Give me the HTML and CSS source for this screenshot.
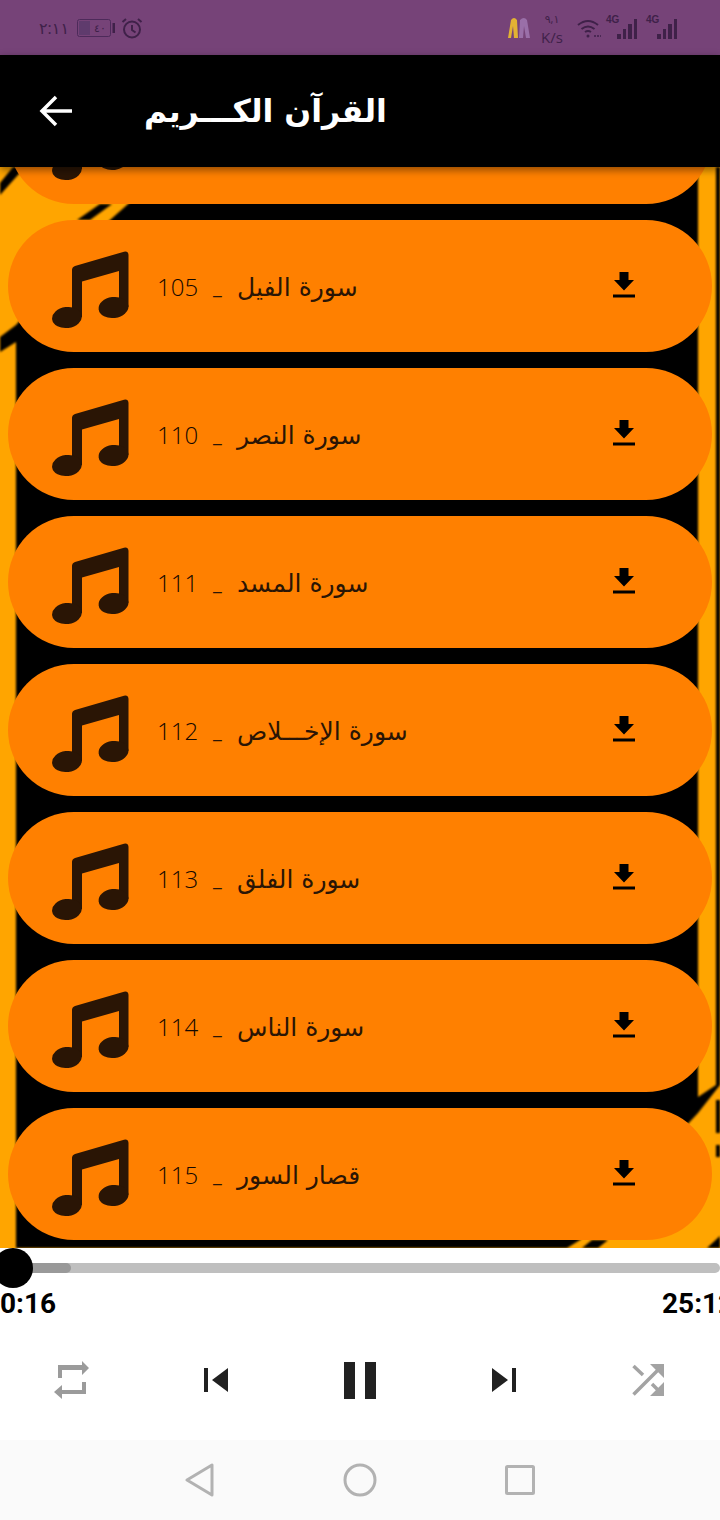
FILE: index.html
```html
<!DOCTYPE html>
<html lang="ar">
<head>
  <meta charset="UTF-8" />
  <title>القرآن الكريم</title>
  <link rel="stylesheet" href="styles.css">
</head>
<body>
  <svg width="0" height="0" class="icon-defs">
    <symbol id="note" viewBox="0 0 78 78">
      <path d="M20 19q0-3 3-4L72 .7q4-1 4.500 3V56H67V20L30 30.500V66H20z"/>
      <ellipse cx="15" cy="66.500" rx="15" ry="10.500" transform="rotate(-8 15 66.500)"/>
      <ellipse cx="61.500" cy="56.500" rx="15" ry="10.500" transform="rotate(-8 61.500 56.500)"/>
    </symbol>
    <symbol id="download" viewBox="0 0 22 26">
      <path d="M6.500 0h9v8H21L11 18.500 1 8h5.500zM0 22.500h22V25.500H0z"/>
    </symbol>
  </svg>

  <div class="status-bar">
    <div class="status-left">
      <span class="clock">٢:١١</span>
      <svg class="battery" width="38" height="20" viewBox="0 0 38 20">
        <rect x="0.500" y="1.500" width="33" height="17" rx="2" fill="none" stroke="#4d2a5a"/>
        <rect x="2" y="3" width="11" height="14" fill="#5f3b6d"/>
        <rect x="35.500" y="5" width="2.500" height="10" fill="#3f2149"/>
        <text x="17" y="14" class="battery-level">٤٠</text>
      </svg>
      <svg class="alarm" width="22" height="22" viewBox="0 0 22 22" fill="none" stroke="#3f2149" stroke-width="2">
        <circle cx="11" cy="12.500" r="8"/>
        <path d="M11 8v5l3.500 2.500M1.500 5 5 2M20.500 5 17 2"/>
      </svg>
    </div>
    <div class="status-right">
      <svg class="app-mark" width="24" height="22" viewBox="0 0 24 22">
        <path d="M1 21 4 3q3-4 6 0l1 18H7L6 9l-2 12z" fill="#e2b233"/>
        <path d="M12 21 13 3q4-4 7 0l3 18h-4l-2-12-1 12z" fill="#9a6fa8"/>
      </svg>
      <div class="speed"><span>٩,١</span><span>K/s</span></div>
      <svg class="wifi" width="24" height="24" viewBox="0 0 24 24" fill="none" stroke="#3f2149" stroke-width="2">
        <path d="M1 9q10-8 20 0M4.500 13q6.500-5 13 0"/>
        <path d="M8 16q3-2 6 0"/>
        <circle cx="11" cy="20" r="1.500" fill="#3f2149" stroke="none"/>
        <path d="M17 20h7" stroke-width="1.500" stroke-dasharray="2 1"/>
      </svg>
      <div class="signal"><b>4G</b><i></i><i></i><i></i><i></i></div>
      <div class="signal"><b>4G</b><i></i><i></i><i></i><i></i></div>
    </div>
  </div>

  <header class="app-bar">
    <svg class="back" width="36" height="32" viewBox="0 0 36 32" fill="none" stroke="#fff" stroke-width="3.500">
      <path d="M34 16H4M18 2 4 16l14 14"/>
    </svg>
    <h1>القرآن الكـــريم</h1>
  </header>

  <main class="list-area">
    <!-- striped wallpaper behind the list -->
    <svg class="stripes" width="720" height="1081" viewBox="0 0 720 1081" fill="#000">
      <path d="M170 0H698V946L580 1073 567 1081H16V175L0 185V170L16 158 110 53z"/>
      <path d="M0 16 13 0H25L0 28zM100 37H112L90 53H77z"/>
      <path d="M716 0H720V918L698 946V930L716 918z"/>
      <path d="M716 933H720V966H716zM716 978H720V990H716zM582 1081 592 1073H608L598 1081zM707 1081 720 1069V1081z"/>
    </svg>
    <ul class="track-list">
      <li class="track"><svg class="note"><use href="#note"/></svg></li>
      <li class="track">
        <svg class="note"><use href="#note"/></svg>
        <span class="num">105</span><span class="sep">_</span><span class="name">سورة الفيل</span>
        <svg class="dl"><use href="#download"/></svg>
      </li>
      <li class="track">
        <svg class="note"><use href="#note"/></svg>
        <span class="num">110</span><span class="sep">_</span><span class="name">سورة النصر</span>
        <svg class="dl"><use href="#download"/></svg>
      </li>
      <li class="track">
        <svg class="note"><use href="#note"/></svg>
        <span class="num">111</span><span class="sep">_</span><span class="name">سورة المسد</span>
        <svg class="dl"><use href="#download"/></svg>
      </li>
      <li class="track">
        <svg class="note"><use href="#note"/></svg>
        <span class="num">112</span><span class="sep">_</span><span class="name">سورة الإخـــلاص</span>
        <svg class="dl"><use href="#download"/></svg>
      </li>
      <li class="track">
        <svg class="note"><use href="#note"/></svg>
        <span class="num">113</span><span class="sep">_</span><span class="name">سورة الفلق</span>
        <svg class="dl"><use href="#download"/></svg>
      </li>
      <li class="track">
        <svg class="note"><use href="#note"/></svg>
        <span class="num">114</span><span class="sep">_</span><span class="name">سورة الناس</span>
        <svg class="dl"><use href="#download"/></svg>
      </li>
      <li class="track">
        <svg class="note"><use href="#note"/></svg>
        <span class="num">115</span><span class="sep">_</span><span class="name">قصار السور</span>
        <svg class="dl"><use href="#download"/></svg>
      </li>
    </ul>
  </main>

  <section class="player">
    <div class="seek">
      <div class="seek-done"></div>
      <div class="seek-thumb"></div>
    </div>
    <div class="times"><span>0:16</span><span class="total">25:12</span></div>
    <div class="controls">
      <svg width="36" height="40" viewBox="0 0 36 40" fill="#9b9b9b">
        <path d="M4 5h24V1l7 7-7 7v-5H8v8H4zM32 22v12H8v5l-8-7 8-7v5H28v-8z"/>
      </svg>
      <svg width="24" height="24" viewBox="0 0 24 24" fill="#212121">
        <path d="M0 0h4v24H0zM24 0v24L8 12z"/>
      </svg>
      <svg width="32" height="37" viewBox="0 0 32 37" fill="#212121">
        <path d="M0 0h11v37H0zM21 0h11v37H21z"/>
      </svg>
      <svg width="24" height="24" viewBox="0 0 24 24" fill="#212121">
        <path d="M0 0v24l16-12zM20 0h4v24h-4z"/>
      </svg>
      <svg width="32" height="32" viewBox="0 0 32 32" fill="#a3a3a3" stroke="#a3a3a3">
        <path d="M1.500 30.500 27 5M1.500 2 11 11M20 20l8 8" fill="none" stroke-width="3.500"/>
        <path d="M18 0H32V14zM32 18V32H18z" stroke="none"/>
      </svg>
    </div>
  </section>

  <nav class="nav-bar">
    <svg width="32" height="34" viewBox="0 0 32 34" fill="none" stroke="#b2b2b2" stroke-width="3" stroke-linejoin="round">
      <path d="M28 2v30L3 17z"/>
    </svg>
    <svg width="34" height="34" viewBox="0 0 34 34" fill="none" stroke="#b2b2b2" stroke-width="3">
      <circle cx="17" cy="17" r="15"/>
    </svg>
    <svg width="30" height="30" viewBox="0 0 30 30" fill="none" stroke="#b2b2b2" stroke-width="3" stroke-linejoin="round">
      <rect x="1.500" y="1.500" width="27" height="27" rx="1"/>
    </svg>
  </nav>
</body>
</html>
```
FILE: styles.css
```css
* {
  box-sizing: border-box;
  margin: 0;
  padding: 0;
}

body {
  width: 720px;
  height: 1520px;
  overflow: hidden;
  font-family: "Open Sans", "DejaVu Sans", sans-serif;
  background-color: #fff;
}

.icon-defs {
  display: none;
}

/* Status bar */
.status-bar {
  height: 55px;
  background-color: #764378;
  display: flex;
  justify-content: space-between;
  align-items: center;
  padding: 0 42px 0 39px;
  color: #3f2149;
}

.status-left,
.status-right {
  display: flex;
  align-items: center;
}

.status-left {
  gap: 6px;
}

.clock {
  font-size: 16px;
  margin-right: 2px;
}

.battery-level {
  font-size: 11px;
  fill: #3f2149;
}

.app-mark {
  margin-right: 4px;
}

.speed {
  display: flex;
  flex-direction: column;
  align-items: center;
  font-size: 15px;
  line-height: 18px;
  width: 34px;
  margin: 0 8px 0 0;
}

.speed span:first-child {
  font-size: 11px;
}

.wifi {
  margin-right: 5px;
}

.signal {
  position: relative;
  display: flex;
  align-items: flex-end;
  gap: 2px;
  width: 32px;
  height: 22px;
  padding-left: 11px;
}

.signal + .signal {
  margin-left: 8px;
}

.signal b {
  position: absolute;
  left: 0;
  top: -3px;
  font: 700 10px "Liberation Sans", sans-serif;
}

.signal i {
  width: 3.5px;
  background-color: #3f2149;
}

.signal i:nth-of-type(1) { height: 5px; }
.signal i:nth-of-type(2) { height: 10px; }
.signal i:nth-of-type(3) { height: 15px; }
.signal i:nth-of-type(4) { height: 20px; }

/* App bar */
.app-bar {
  position: relative;
  z-index: 2;
  height: 112px;
  background-color: #000;
  display: flex;
  align-items: center;
  padding-left: 38px;
  box-shadow: 0 3px 8px rgba(0, 0, 0, 0.45);
}

.app-bar h1 {
  margin-left: 70px;
  font-family: "DejaVu Sans", sans-serif;
  font-size: 31.5px;
  font-weight: 700;
  color: #fff;
}

/* Surah list */
.list-area {
  position: relative;
  height: 1081px;
  overflow: hidden;
  background-color: #ffa500;
}

.stripes {
  position: absolute;
  top: 0;
  left: 0;
  filter: blur(0.8px);
}

.track-list {
  position: relative;
  list-style: none;
  display: flex;
  flex-direction: column;
  gap: 16px;
  padding: 0 8px;
  margin-top: -95px;
}

.track {
  height: 132px;
  border-radius: 66px;
  background-color: #ff8000;
  display: flex;
  align-items: center;
  padding-left: 44px;
  color: #2a1505;
}

.note {
  width: 78px;
  height: 78px;
  fill: #2a1505;
  flex: none;
  margin-right: 27px;
  margin-top: 8px;
}

.num {
  font-size: 24px;
  font-weight: 300;
  color: #140800;
  width: 41px;
}

.sep {
  width: 39px;
  padding-left: 15px;
  font-size: 20px;
}

.name {
  font-family: "DejaVu Sans", sans-serif;
  font-size: 25px;
  font-weight: 400;
  margin-top: 2px;
}

.dl {
  width: 22px;
  height: 26px;
  fill: #000;
  margin-left: auto;
  margin-right: 77px;
  margin-top: -2px;
}

/* Player */
.player {
  height: 192px;
  padding-top: 15px;
  background-color: #fff;
}

.seek {
  position: relative;
  height: 10px;
  background-color: #bfbfbf;
  border-radius: 5px;
}

.seek-done {
  width: 71px;
  height: 10px;
  background-color: #999;
  border-radius: 5px;
}

.seek-thumb {
  position: absolute;
  left: -7px;
  top: -15px;
  width: 40px;
  height: 40px;
  border-radius: 50%;
  background-color: #000;
}

.times {
  display: flex;
  justify-content: space-between;
  overflow: hidden;
  margin-top: 14px;
  font-family: Roboto, sans-serif;
  font-size: 28px;
  font-weight: 700;
  line-height: 34px;
  color: #000;
}

.total {
  flex: none;
  width: 58px;
  white-space: nowrap;
  overflow: hidden;
}

.controls {
  display: grid;
  grid-template-columns: repeat(5, 144px);
  justify-items: center;
  align-items: center;
  height: 60px;
  margin-top: 29px;
}

/* Navigation bar */
.nav-bar {
  height: 80px;
  background-color: #fafafa;
  display: grid;
  grid-template-columns: 160px 160px 160px;
  justify-content: center;
  justify-items: center;
  align-items: center;
}
```
